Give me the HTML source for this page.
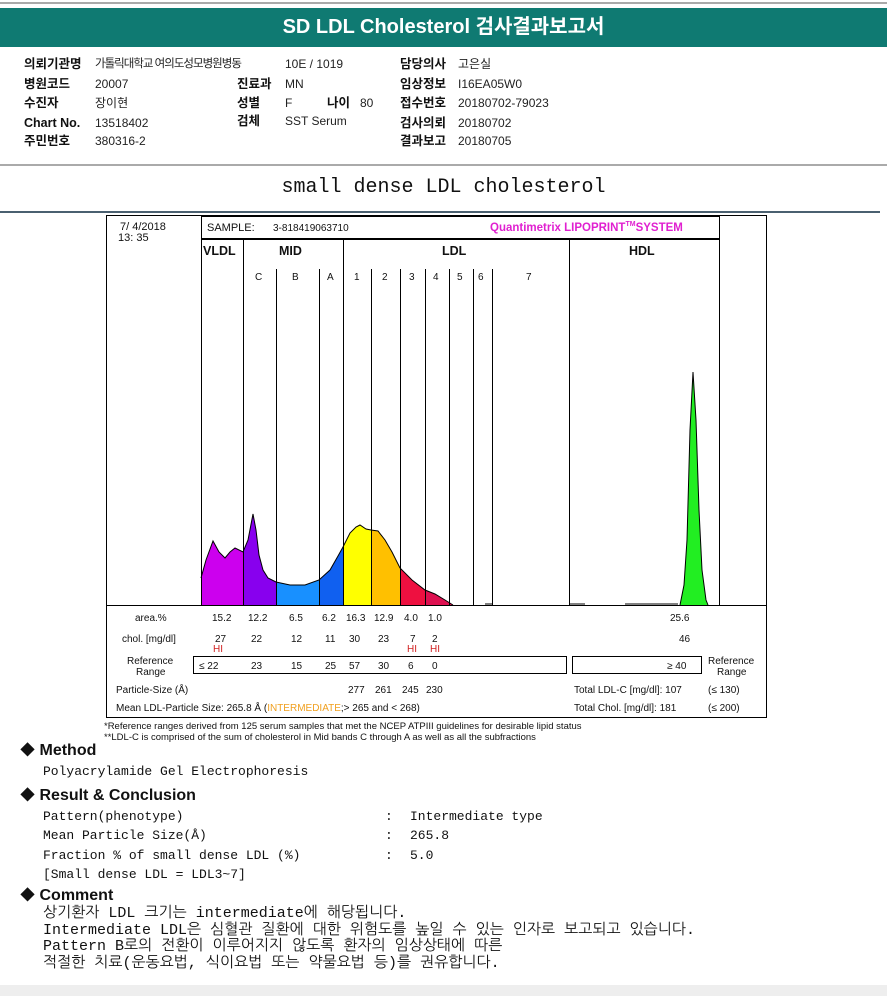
<!DOCTYPE html>
<html><head><meta charset="utf-8"><style>
body{margin:0;width:887px;height:996px;background:#fff;position:relative;overflow:hidden;font-family:"Liberation Sans","Noto Sans CJK KR",sans-serif}
.a{position:absolute;white-space:nowrap;line-height:16px}
.k{font-size:12px;color:#222}
.b{font-weight:bold;font-size:12.5px;color:#111}
.m{font-family:"Liberation Mono","NanumGothic",monospace;font-size:13px;color:#111}
.h{font-family:"Liberation Sans","NanumGothic",sans-serif;font-size:16px;font-weight:bold;color:#111}
</style></head><body>
<div class="a" style="left:0;top:2px;width:887px;height:2px;background:#aaa"></div>
<div class="a" style="left:0;top:8px;width:887px;height:39px;background:#0f7a72;color:#fff;font-weight:bold;font-size:20px;text-align:center;line-height:39px">SD LDL Cholesterol 검사결과보고서</div>

<div class="a b" style="left:24px;top:56px">의뢰기관명</div><div class="a k" style="left:95px;top:56px;letter-spacing:-1px;font-size:11.5px">가톨릭대학교 여의도성모병원병동</div><div class="a k" style="left:285px;top:56px">10E / 1019</div>
<div class="a b" style="left:400px;top:56px">담당의사</div><div class="a k" style="left:458px;top:56px">고은실</div>
<div class="a b" style="left:24px;top:76px">병원코드</div><div class="a k" style="left:95px;top:76px">20007</div><div class="a b" style="left:237px;top:76px">진료과</div><div class="a k" style="left:285px;top:76px">MN</div>
<div class="a b" style="left:400px;top:76px">임상정보</div><div class="a k" style="left:458px;top:76px">I16EA05W0</div>
<div class="a b" style="left:24px;top:95px">수진자</div><div class="a k" style="left:95px;top:95px">장이현</div><div class="a b" style="left:237px;top:95px">성별</div><div class="a k" style="left:285px;top:95px">F</div><div class="a b" style="left:327px;top:95px">나이</div><div class="a k" style="left:360px;top:95px">80</div>
<div class="a b" style="left:400px;top:95px">접수번호</div><div class="a k" style="left:458px;top:95px">20180702-79023</div>
<div class="a b" style="left:24px;top:115px">Chart No.</div><div class="a k" style="left:95px;top:115px">13518402</div><div class="a b" style="left:237px;top:113px">검체</div><div class="a k" style="left:285px;top:113px">SST Serum</div>
<div class="a b" style="left:400px;top:115px">검사의뢰</div><div class="a k" style="left:458px;top:115px">20180702</div>
<div class="a b" style="left:24px;top:133px">주민번호</div><div class="a k" style="left:95px;top:133px">380316-2</div>
<div class="a b" style="left:400px;top:133px">결과보고</div><div class="a k" style="left:458px;top:133px">20180705</div>

<div class="a" style="left:0;top:164px;width:887px;height:2px;background:#aaa"></div>
<div class="a" style="left:0;top:180px;width:887px;text-align:center;font-family:'Liberation Mono',monospace;font-size:20px;color:#111">small dense LDL cholesterol</div>
<div class="a" style="left:0;top:211px;width:880px;height:2px;background:#4a6070"></div>

<svg class="a" style="left:0;top:0" width="887" height="996" viewBox="0 0 887 996">
<defs><clipPath id="c"><path d="M201,578 L206,560 L213,541 L219,552 L225,558 L230,552 L235,548 L243,552 L248,540 L253,514 L256,530 L259,555 L263,570 L268,578 L276,582 L290,585 L305,585 L319,580 L330,570 L338,556 L343,547 L350,533 L356,527 L360,525 L366,529 L371,530 L378,531 L385,540 L392,552 L400,568 L412,580 L425,590 L435,594 L445,600 L453,605 L201,605Z M680,605 L684,585 L687,540 L690,430 L693,372 L696,420 L699,510 L702,570 L706,600 L708,605Z"/></clipPath></defs>
<g clip-path="url(#c)">
<rect x="201" y="300" width="42" height="305" fill="#cc00ee"/>
<rect x="243" y="300" width="33" height="305" fill="#8800ee"/>
<rect x="276" y="300" width="43" height="305" fill="#1890ff"/>
<rect x="319" y="300" width="24" height="305" fill="#1060f0"/>
<rect x="343" y="300" width="28" height="305" fill="#ffff00"/>
<rect x="371" y="300" width="29" height="305" fill="#ffc000"/>
<rect x="400" y="300" width="25" height="305" fill="#ee1040"/>
<rect x="425" y="300" width="30" height="305" fill="#dd1050"/>
<rect x="670" y="300" width="50" height="305" fill="#22ee22"/>
</g>
<path d="M201,578 L206,560 L213,541 L219,552 L225,558 L230,552 L235,548 L243,552 L248,540 L253,514 L256,530 L259,555 L263,570 L268,578 L276,582 L290,585 L305,585 L319,580 L330,570 L338,556 L343,547 L350,533 L356,527 L360,525 L366,529 L371,530 L378,531 L385,540 L392,552 L400,568 L412,580 L425,590 L435,594 L445,600 L453,605 M680,605 L684,585 L687,540 L690,430 L693,372 L696,420 L699,510 L702,570 L706,600 L708,605 M570,604 L585,604 M625,604 L678,604 M485,604 L492,604" fill="none" stroke="#000" stroke-width="1"/>
<g stroke="#000" stroke-width="1" fill="none">
<rect x="106.5" y="215.5" width="660" height="502"/>
<rect x="201.5" y="216.5" width="518" height="22"/>
<line x1="201" y1="239" x2="720" y2="239" stroke-width="2"/>
<line x1="106" y1="605.5" x2="767" y2="605.5"/>
<line x1="201.5" y1="239" x2="201.5" y2="605"/>
<line x1="243.5" y1="239" x2="243.5" y2="605"/>
<line x1="343.5" y1="239" x2="343.5" y2="605"/>
<line x1="569.5" y1="239" x2="569.5" y2="605"/>
<line x1="719.5" y1="239" x2="719.5" y2="605"/>
<line x1="276.5" y1="269" x2="276.5" y2="605"/>
<line x1="319.5" y1="269" x2="319.5" y2="605"/>
<line x1="371.5" y1="269" x2="371.5" y2="605"/>
<line x1="400.5" y1="269" x2="400.5" y2="605"/>
<line x1="425.5" y1="269" x2="425.5" y2="605"/>
<line x1="449.5" y1="269" x2="449.5" y2="605"/>
<line x1="473.5" y1="269" x2="473.5" y2="605"/>
<line x1="492.5" y1="269" x2="492.5" y2="605"/>
<rect x="193.5" y="656.5" width="373" height="17"/>
<rect x="572.5" y="656.5" width="129" height="17"/>
</g>
<g font-family="Liberation Sans,sans-serif" font-size="11" fill="#111">
<text x="120" y="230">7/  4/2018</text><text x="118" y="241">13: 35</text>
<text x="207" y="231">SAMPLE:</text><text x="273" y="231" font-size="10">3-818419063710</text>
<text x="490" y="231" fill="#e020d0" font-weight="bold" font-size="11.5">Quantimetrix LIPOPRINT<tspan font-size="7" dy="-5">TM</tspan><tspan dy="5">SYSTEM</tspan></text>
<g font-weight="bold" font-size="12.5"><text x="203" y="255">VLDL</text><text x="279" y="255">MID</text><text x="442" y="255">LDL</text><text x="629" y="255">HDL</text></g>
<g font-size="10"><text x="255" y="280">C</text><text x="292" y="280">B</text><text x="327" y="280">A</text><text x="354" y="280">1</text><text x="382" y="280">2</text><text x="409" y="280">3</text><text x="433" y="280">4</text><text x="457" y="280">5</text><text x="478" y="280">6</text><text x="526" y="280">7</text></g>
<g font-size="10">
<text x="135" y="621">area.%</text>
<text x="212" y="621">15.2</text><text x="248" y="621">12.2</text><text x="289" y="621">6.5</text><text x="322" y="621">6.2</text><text x="346" y="621">16.3</text><text x="374" y="621">12.9</text><text x="404" y="621">4.0</text><text x="428" y="621">1.0</text><text x="670" y="621">25.6</text>
<text x="122" y="642">chol. [mg/dl]</text>
<text x="215" y="642">27</text><text x="251" y="642">22</text><text x="291" y="642">12</text><text x="325" y="642">11</text><text x="349" y="642">30</text><text x="378" y="642">23</text><text x="410" y="642">7</text><text x="432" y="642">2</text><text x="679" y="642">46</text>
<g fill="#d02020"><text x="213" y="652">HI</text><text x="407" y="652">HI</text><text x="430" y="652">HI</text></g>
<text x="127" y="664">Reference</text><text x="136" y="675">Range</text>
<text x="708" y="664">Reference</text><text x="717" y="675">Range</text>
<text x="199" y="669">≤ 22</text><text x="251" y="669">23</text><text x="291" y="669">15</text><text x="325" y="669">25</text><text x="349" y="669">57</text><text x="378" y="669">30</text><text x="408" y="669">6</text><text x="432" y="669">0</text><text x="667" y="669">≥ 40</text>
<text x="116" y="693">Particle-Size (Å)</text>
<text x="348" y="693">277</text><text x="375" y="693">261</text><text x="402" y="693">245</text><text x="426" y="693">230</text>
<text x="574" y="693">Total LDL-C [mg/dl]:  107</text><text x="708" y="693">(≤ 130)</text>
<text x="116" y="711">Mean LDL-Particle Size:   265.8 Å  (<tspan fill="#f0a020">INTERMEDIATE</tspan>;&gt; 265 and &lt; 268)</text>
<text x="574" y="711">Total Chol. [mg/dl]:   181</text><text x="708" y="711">(≤ 200)</text>
<text x="104" y="729" font-size="9.5">*Reference ranges derived from 125 serum samples that met the NCEP ATPIII guidelines for desirable lipid status</text>
<text x="104" y="740" font-size="9.5">**LDL-C is comprised of the sum of cholesterol in Mid bands C through A as well as all the subfractions</text>
</g></g>
</svg>

<div class="a h" style="left:20px;top:743px">◆ Method</div>
<div class="a m" style="left:43px;top:764px">Polyacrylamide Gel Electrophoresis</div>
<div class="a h" style="left:20px;top:788px">◆ Result &amp; Conclusion</div>
<div class="a m" style="left:43px;top:809px">Pattern(phenotype)</div><div class="a m" style="left:385px;top:809px">:</div><div class="a m" style="left:410px;top:809px">Intermediate type</div>
<div class="a m" style="left:43px;top:828px">Mean Particle Size(Å)</div><div class="a m" style="left:385px;top:828px">:</div><div class="a m" style="left:410px;top:828px">265.8</div>
<div class="a m" style="left:43px;top:848px">Fraction % of small dense LDL (%)</div><div class="a m" style="left:385px;top:848px">:</div><div class="a m" style="left:410px;top:848px">5.0</div>
<div class="a m" style="left:43px;top:867px">[Small dense LDL = LDL3~7]</div>
<div class="a h" style="left:20px;top:888px">◆ Comment</div>
<div class="a m" style="left:43px;top:906px;line-height:16.5px;font-size:15px">상기환자 LDL 크기는 intermediate에 해당됩니다.<br>Intermediate LDL은 심혈관 질환에 대한 위험도를 높일 수 있는 인자로 보고되고 있습니다.<br>Pattern B로의 전환이 이루어지지 않도록 환자의 임상상태에 따른<br>적절한 치료(운동요법, 식이요법 또는 약물요법 등)를 권유합니다.</div>
<div class="a" style="left:0;top:985px;width:887px;height:11px;background:#eee"></div>
</body></html>
